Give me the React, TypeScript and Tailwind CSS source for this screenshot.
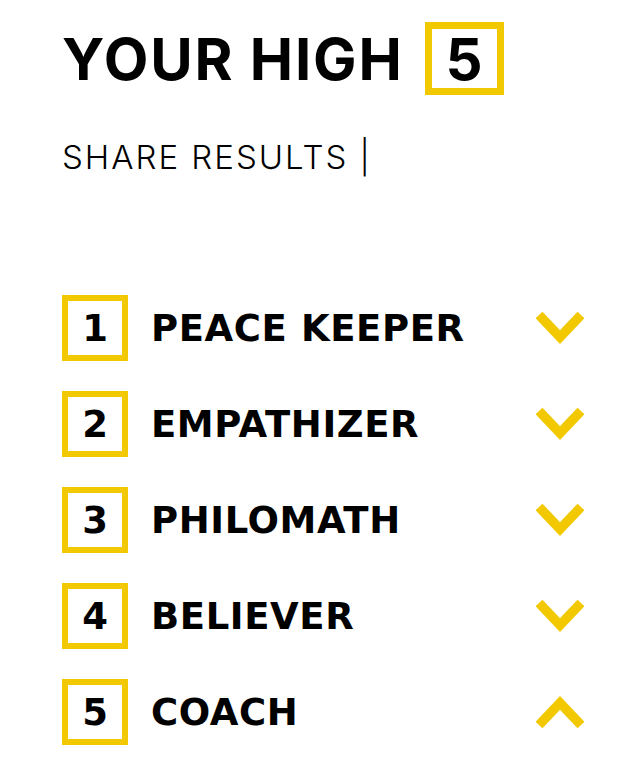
const strengths = ['PEACE KEEPER', 'EMPATHIZER', 'PHILOMATH', 'BELIEVER', 'COACH'];

function Chevron({ up }: { up?: boolean }) {
  return (
    <svg width="52" height="36" viewBox="0 0 52 36" className={up ? 'rotate-180' : ''}>
      <polyline
        points="5,5 26,27 47,5"
        fill="none"
        stroke="#F2C800"
        strokeWidth="9.5"
        strokeLinejoin="miter"
      />
    </svg>
  );
}

export default function App() {
  // open row gets the up arrow
  const open = 4;

  return (
    <div className="min-h-[765px] bg-white pl-[62px] pr-[42px] pt-[22px] text-black">
      <div className="flex items-center">
        <h1 className="font-['Inter','DejaVu_Sans',sans-serif] text-[58px] font-bold leading-none tracking-[1.8px]">
          YOUR HIGH
        </h1>
        <div className="ml-[21px] flex h-[73px] w-[79px] items-center justify-center border-[7px] border-[#F2C800] font-['Inter',sans-serif] text-[58px] font-bold leading-none">
          5
        </div>
      </div>

      <p className="mt-[46px] font-['Inter',sans-serif] text-[33px] font-light leading-none tracking-[2px]">
        SHARE RESULTS |
      </p>

      <ul className="mt-[121px] flex flex-col gap-[30px]">
        {strengths.map((name, i) => (
          <li key={name} className="flex items-center">
            <div className="flex h-[66px] w-[66px] items-center justify-center border-[6px] border-[#F2C800] font-['DejaVu_Sans',sans-serif] text-[37px] font-bold leading-none">
              {i + 1}
            </div>
            <span className="ml-[23px] flex-1 font-['DejaVu_Sans',sans-serif] text-[37px] font-bold leading-none tracking-[0.6px]">
              {name}
            </span>
            <Chevron up={i === open} />
          </li>
        ))}
      </ul>
    </div>
  );
}
